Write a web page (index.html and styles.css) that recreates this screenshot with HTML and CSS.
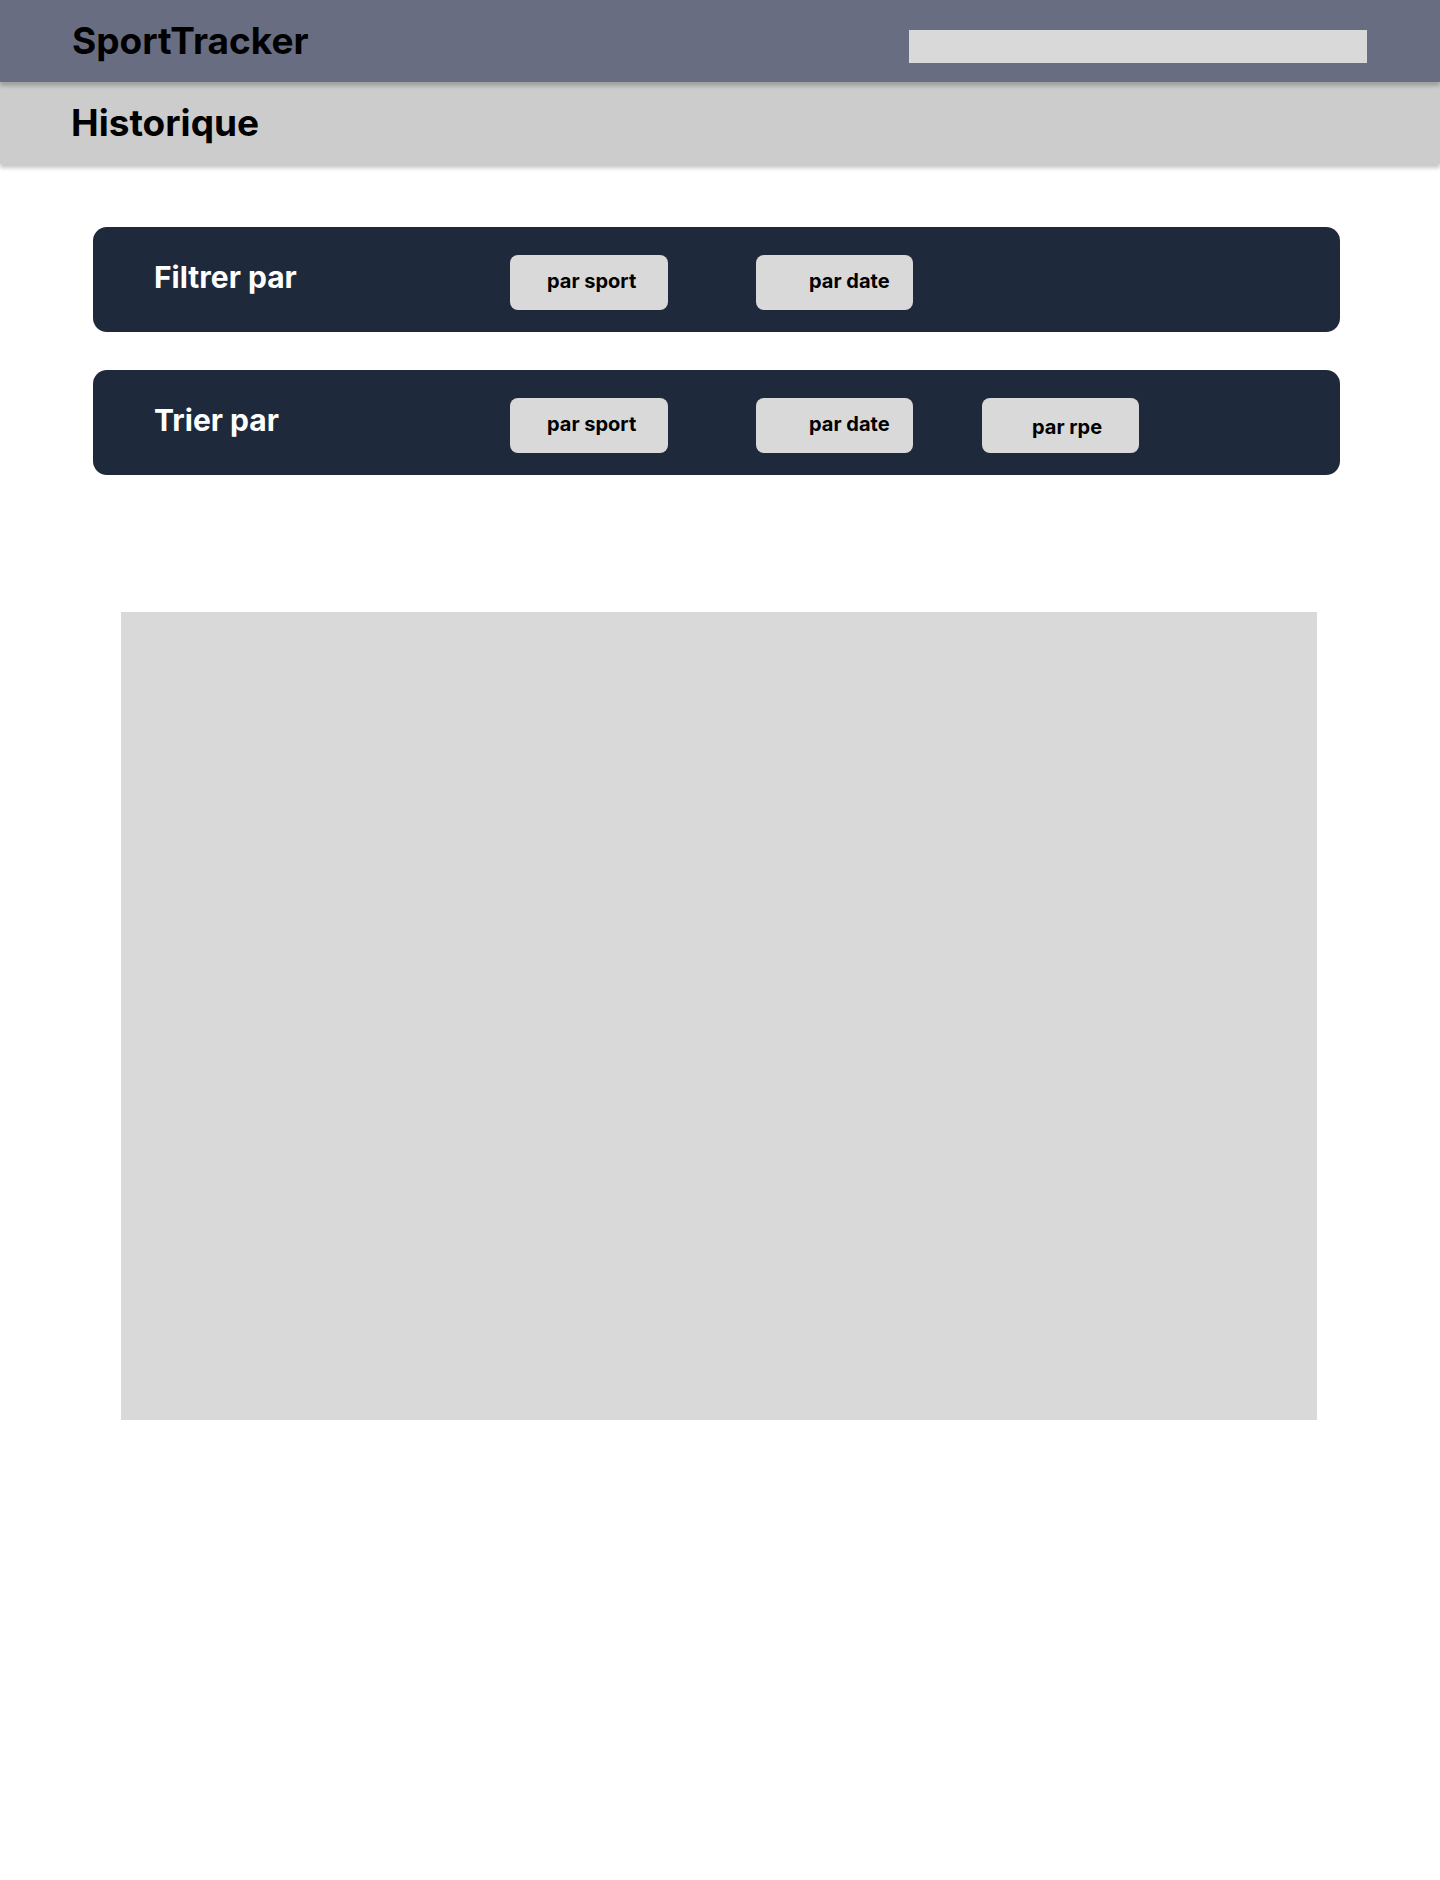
FILE: index.html
```html
<!DOCTYPE html>
<html lang="fr">
<head>
<meta charset="utf-8">
<title>SportTracker - Historique</title>
<link rel="stylesheet" href="styles.css">
</head>
<body>
<header class="topbar">
  <div class="brand">SportTracker</div>
  <div class="search"></div>
</header>
<div class="subbar">
  <h1 class="page-title">Historique</h1>
</div>
<main class="content">
  <section class="panel">
    <h2 class="panel-title">Filtrer par</h2>
    <button class="chip chip-sport">par sport</button>
    <button class="chip chip-date">par date</button>
  </section>
  <section class="panel panel-sort">
    <h2 class="panel-title">Trier par</h2>
    <button class="chip chip-sport">par sport</button>
    <button class="chip chip-date">par date</button>
    <button class="chip chip-rpe">par rpe</button>
  </section>
  <div class="results"></div>
</main>
</body>
</html>
```

FILE: styles.css
```css
* { box-sizing: border-box; }
html, body { margin: 0; padding: 0; }
body {
  background: #ffffff;
  font-family: Inter, "Noto Sans", sans-serif;
  color: #000;
  min-height: 1880px;
}
.topbar {
  position: relative;
  z-index: 2;
  height: 82px;
  background: #686d82;
  display: flex;
  align-items: flex-start;
  justify-content: space-between;
  padding: 0 73px 0 72px;
  box-shadow: 0 4px 4px rgba(0,0,0,0.22);
}
.brand {
  margin-top: 23px;
  font-size: 37px;
  line-height: 36px;
  font-weight: 700;
}
.search {
  margin-top: 30px;
  width: 458px;
  height: 33px;
  background: #d9d9d9;
}
.subbar {
  position: relative;
  z-index: 1;
  height: 82px;
  background: #cccccc;
  padding: 23px 0 0 71px;
  box-shadow: 0 4px 4px rgba(0,0,0,0.22);
}
.page-title {
  margin: 0;
  font-size: 37px;
  line-height: 36px;
  font-weight: 700;
}
.content {
  padding: 63px 0 0 93px;
}
.panel {
  width: 1247px;
  height: 105px;
  background: #1e293b;
  border-radius: 14px;
  display: flex;
  align-items: flex-start;
  padding: 28px 0 0 61px;
}
.panel-sort { margin-top: 38px; }
.panel-title {
  margin: 7px 0 0 0;
  width: 356px;
  color: #ffffff;
  font-size: 30px;
  line-height: 30px;
  font-weight: 700;
}
.chip {
  width: 158px;
  height: 55px;
  border: none;
  border-radius: 8px;
  background: #d9d9d9;
  color: #000;
  font-family: Inter, "Noto Sans", sans-serif;
  font-size: 20px;
  line-height: 20px;
  font-weight: 700;
  text-align: left;
  padding: 16px 0 19px 37px;
  display: block;
}
.chip-date {
  margin-left: 88px;
  width: 157px;
  padding-left: 53px;
}
.chip-rpe {
  margin-left: 69px;
  width: 157px;
  padding: 19px 0 16px 50px;
}
.results {
  margin: 137px 0 0 28px;
  width: 1196px;
  height: 808px;
  background: #d9d9d9;
}
```
